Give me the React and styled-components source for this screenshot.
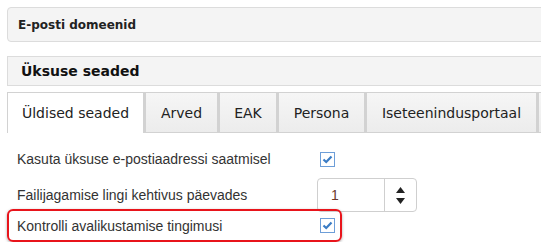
import React from "react"
import styled, { createGlobalStyle } from "styled-components"

const GlobalStyle = createGlobalStyle`
  html, body {
    margin: 0;
    padding: 0;
    background: #fff;
    overflow: hidden;
  }
`

const Page = styled.div`
  width: 580px;
  padding: 7px 0 0 7px;
  font-family: "DejaVu Sans", Verdana, sans-serif;
  color: #333;
`

const Panel = styled.div`
  height: 35px;
  box-sizing: border-box;
  display: flex;
  align-items: center;
  padding-left: 10px;
  background: #f4f4f4;
  border: 1px solid #dcdcdc;
  border-radius: 4px 0 0 4px;
  font-size: 12px;
  font-weight: bold;
  color: #222;
`

const SectionTitle = styled.div`
  margin-top: 14px;
  height: 30px;
  box-sizing: border-box;
  display: flex;
  align-items: center;
  padding-left: 13px;
  background: #f4f4f4;
  border-top: 1px solid #dcdcdc;
  border-bottom: 1px solid #dcdcdc;
  border-left: 1px solid #dcdcdc;
  font-size: 14px;
  font-weight: bold;
  color: #111;
`

const Tabs = styled.div`
  margin-top: 6px;
  display: flex;
  height: 41px;
`

const Tab = styled.div`
  box-sizing: border-box;
  width: ${(p) => p.$w}px;
  flex-shrink: 0;
  height: 41px;
  display: flex;
  align-items: center;
  justify-content: center;
  font-size: 14px;
  color: #222;
  background: ${(p) => (p.$active ? "#fff" : "linear-gradient(#f6f6f6, #ececec)")};
  border: 1px solid #d2d2d2;
  border-left-width: ${(p) => (p.$first ? 1 : 2)}px;
  border-bottom: ${(p) => (p.$active ? "none" : "1px solid #d2d2d2")};
  white-space: nowrap;
`

const Form = styled.div`
  margin-top: 11px;
  display: flex;
  flex-direction: column;
`

const Row = styled.div`
  box-sizing: border-box;
  width: 335px;
  height: ${(p) => p.$h}px;
  margin-top: ${(p) => p.$mt || 0}px;
  display: grid;
  grid-template-columns: 302px auto;
  align-items: center;
  padding-left: 8px;
  border: 2px solid ${(p) => (p.$highlight ? "#e8141b" : "transparent")};
  border-radius: 6px;
  box-shadow: ${(p) => (p.$highlight ? "0 1px 3px rgba(0,0,0,0.35)" : "none")};
  font-family: "Liberation Sans", Arial, sans-serif;
  font-size: 14px;
  color: #333;
`

const Label = styled.span``

const CheckBox = styled.span`
  width: 15px;
  height: 15px;
  box-sizing: border-box;
  border: 1px solid #6d9ed8;
  background: #fff;
  display: flex;
  align-items: center;
  justify-content: center;
  margin-left: 1px;
`

const NumberInput = styled.div`
  width: 100px;
  height: 34px;
  box-sizing: border-box;
  display: flex;
  border: 1px solid #cfcfcf;
  border-radius: 4px;
  margin-left: -2px;
`

const NumberValue = styled.div`
  flex: 1;
  display: flex;
  align-items: center;
  padding-left: 13px;
  font-size: 14px;
  color: #6b3a2a;
  border-right: 1px solid #cfcfcf;
`

const Spinner = styled.div`
  width: 31px;
  display: flex;
  flex-direction: column;
  align-items: center;
  justify-content: center;
  gap: 5px;
`

const Check = () => (
  <CheckBox>
    <svg width="11" height="9" viewBox="0 0 11 9">
      <path d="M1.5 4.5 L4.2 7 L9.5 1.5" fill="none" stroke="#3b7cc4" strokeWidth="2.2" />
    </svg>
  </CheckBox>
)

const Arrow = ({ down }) => (
  <svg width="9" height="6" viewBox="0 0 9 6">
    <path d={down ? "M0 0 H9 L4.5 6 Z" : "M0 6 H9 L4.5 0 Z"} fill="#222" />
  </svg>
)

const App = () => {
  return (
    <Page>
      <GlobalStyle />
      <Panel>E-posti domeenid</Panel>
      <SectionTitle>Üksuse seaded</SectionTitle>
      <Tabs>
        <Tab $active $first $w={137}>Üldised seaded</Tab>
        <Tab $w={74}>Arved</Tab>
        <Tab $w={59}>EAK</Tab>
        <Tab $w={88}>Persona</Tab>
        <Tab $w={172}>Iseteenindusportaal</Tab>
        <Tab $w={40} />
      </Tabs>
      <Form>
        <Row $h={30}>
          <Label>Kasuta üksuse e-postiaadressi saatmisel</Label>
          <Check />
        </Row>
        <Row $h={34} $mt={2}>
          <Label>Failijagamise lingi kehtivus päevades</Label>
          <NumberInput>
            <NumberValue>1</NumberValue>
            <Spinner>
              <Arrow />
              <Arrow down />
            </Spinner>
          </NumberInput>
        </Row>
        <Row $h={33} $mt={-1} $highlight>
          <Label>Kontrolli avalikustamise tingimusi</Label>
          <Check />
        </Row>
      </Form>
    </Page>
  )
}

export default App
